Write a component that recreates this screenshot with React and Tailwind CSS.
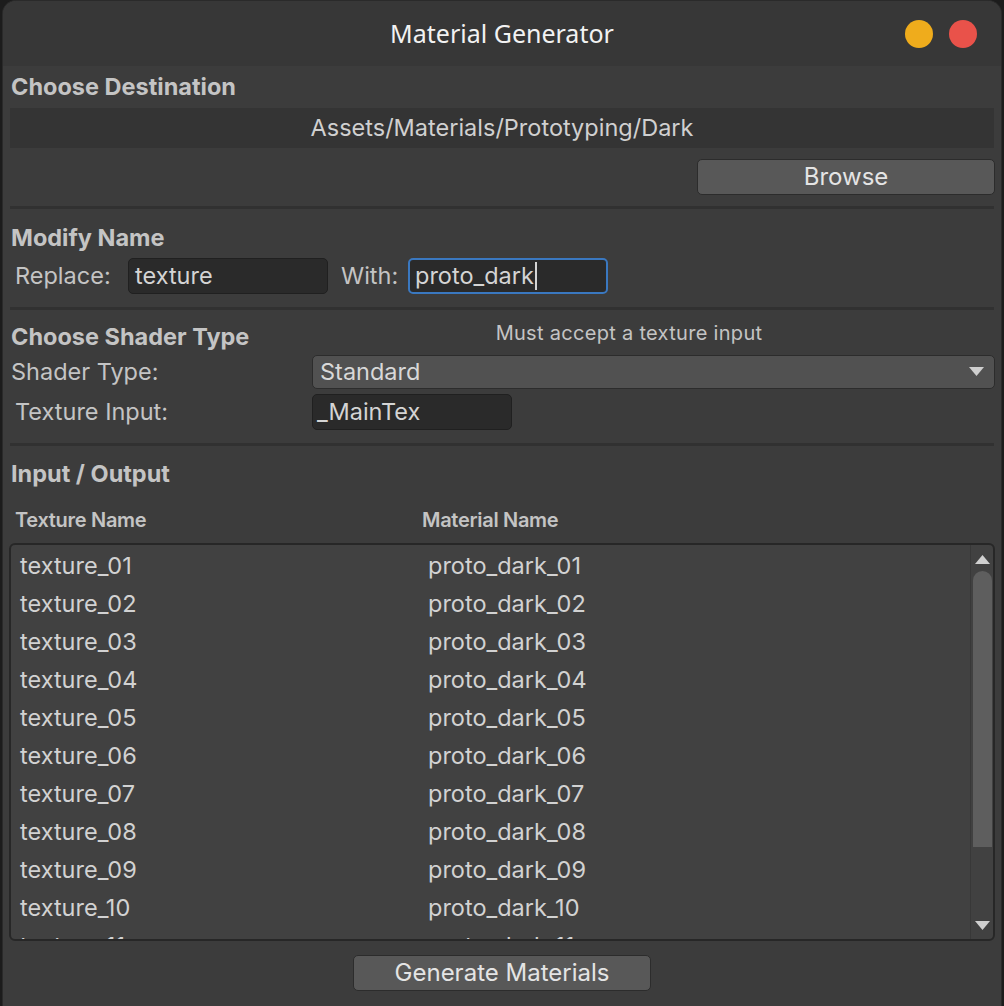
import React from "react";

const rows = Array.from({ length: 11 }, (_, i) => String(i + 1).padStart(2, "0"));

function Sep({ className = "" }) {
  return <div className={"h-[3px] bg-[#313131] " + className} />;
}

export default function App() {
  return (
    <div className="w-[1004px] h-[1006px] bg-[#1c1c1c] overflow-hidden" style={{ fontFamily: "Inter, 'Noto Sans', sans-serif" }}>
      <div className="mx-[2px] h-full rounded-t-[14px] bg-[#3c3c3c] flex flex-col overflow-hidden border-t border-x border-[#2a2a2a]">
        {/* Title bar */}
        <div className="relative h-[65px] shrink-0 bg-[#373737] flex items-center justify-center">
          <span className="text-[25px] text-[#f2f2f2]" style={{ fontFamily: "'Noto Sans', sans-serif" }}>Material Generator</span>
          <div className="absolute right-[24px] top-[19px] flex gap-[16px]">
            <div className="w-[28px] h-[28px] rounded-full bg-[#efac1c]" />
            <div className="w-[28px] h-[28px] rounded-full bg-[#e9524a]" />
          </div>
        </div>

        {/* Content */}
        <div className="flex flex-col px-[7px] text-[#c4c4c4] text-[23.5px]">
          <div className="h-[42px] flex items-center pl-[1px] font-bold text-[23.5px] text-[#c4c4c4]">Choose Destination</div>
          <div className="h-[40px] bg-[#343434] flex items-center justify-center text-[#d0d0d0]">Assets/Materials/Prototyping/Dark</div>
          <div className="flex justify-end mt-[11px] -mr-[1px]">
            <button className="w-[298px] h-[36px] rounded-[5px] bg-[#585858] border border-[#2c2c2c] text-[#e4e4e4] text-[24px] flex items-center justify-center">Browse</button>
          </div>
          <Sep className="mt-[11px]" />

          <div className="mt-[9px] h-[40px] flex items-center pl-[1px] font-bold text-[23.5px]">Modify Name</div>
          <div className="h-[36px] flex items-center">
            <span className="pl-[5px] w-[118px]">Replace:</span>
            <div className="w-[200px] h-[36px] rounded-[5px] bg-[#2a2a2a] border border-[#202020] flex items-center px-[6px] text-[#d4d4d4]">texture</div>
            <span className="ml-[13px] w-[67px]">With:</span>
            <div className="w-[200px] h-[36px] rounded-[5px] bg-[#2a2a2a] border-2 border-[#3a78c0] flex items-center px-[5px] text-[#d4d4d4]">
              proto_dark<span className="inline-block w-[2px] h-[28px] bg-[#d4d4d4] ml-[1px]" />
            </div>
          </div>
          <Sep className="mt-[13px]" />

          <div className="mt-[9px] h-[36px] flex items-center">
            <span className="w-[302px] pl-[1px] font-bold text-[23.5px]">Choose Shader Type</span>
            <span className="w-[634px] text-center text-[20px] -mt-[8px] tracking-[0.3px]">Must accept a texture input</span>
          </div>
          <div className="h-[34px] flex items-center">
            <span className="w-[302px] pl-[1px]">Shader Type:</span>
            <div className="flex-1 -mr-[1px] h-[34px] rounded-[5px] bg-[#515151] border border-[#2c2c2c] flex items-center justify-between pl-[7px] pr-[10px] text-[#d8d8d8]">
              <span>Standard</span>
              <svg width="15" height="10" viewBox="0 0 15 10"><path d="M0 0 L15 0 L7.5 9 Z" fill="#cfcfcf" /></svg>
            </div>
          </div>
          <div className="mt-[5px] h-[36px] flex items-center">
            <span className="w-[302px] pl-[5px]">Texture Input:</span>
            <div className="w-[200px] h-[36px] rounded-[5px] bg-[#2a2a2a] border border-[#202020] flex items-center px-[4px] text-[#d4d4d4]">_MainTex</div>
          </div>
          <Sep className="mt-[13px]" />

          <div className="mt-[8px] h-[40px] flex items-center pl-[1px] font-bold text-[23.5px]">Input / Output</div>
          <div className="h-[49px] flex items-center pt-[3px] text-[20px] font-semibold tracking-[-0.3px]">
            <span className="w-[412px] pl-[5px]">Texture Name</span>
            <span>Material Name</span>
          </div>

          <div className="-ml-[1px] -mr-[1px] h-[398px] rounded-[6px] border-2 border-[#272727] bg-[#414141] flex overflow-hidden">
            <div className="flex-1 overflow-hidden pt-[2px] text-[#d2d2d2]">
              {rows.map((n) => (
                <div key={n} className="h-[38px] flex items-center whitespace-nowrap">
                  <span className="w-[417px] pl-[9px]">texture_{n}</span>
                  <span>proto_dark_{n}</span>
                </div>
              ))}
            </div>
            <div className="w-[23px] border-l border-[#383838] flex flex-col items-center">
              <svg className="mt-[9px]" width="15" height="10" viewBox="0 0 15 10"><path d="M0 10 L15 10 L7.5 1 Z" fill="#d0d0d0" /></svg>
              <div className="mt-[7px] w-[19px] h-[276px] rounded-t-full rounded-b-[10px] bg-[#5e5e5e]" />
              <div className="flex-1" />
              <svg className="mb-[8px]" width="15" height="10" viewBox="0 0 15 10"><path d="M0 0 L15 0 L7.5 9 Z" fill="#d0d0d0" /></svg>
            </div>
          </div>

          <div className="flex justify-center mt-[14px]">
            <button className="w-[298px] h-[36px] rounded-[5px] bg-[#585858] border border-[#2c2c2c] text-[#e4e4e4] text-[24px] flex items-center justify-center">Generate Materials</button>
          </div>
        </div>
      </div>
    </div>
  );
}
